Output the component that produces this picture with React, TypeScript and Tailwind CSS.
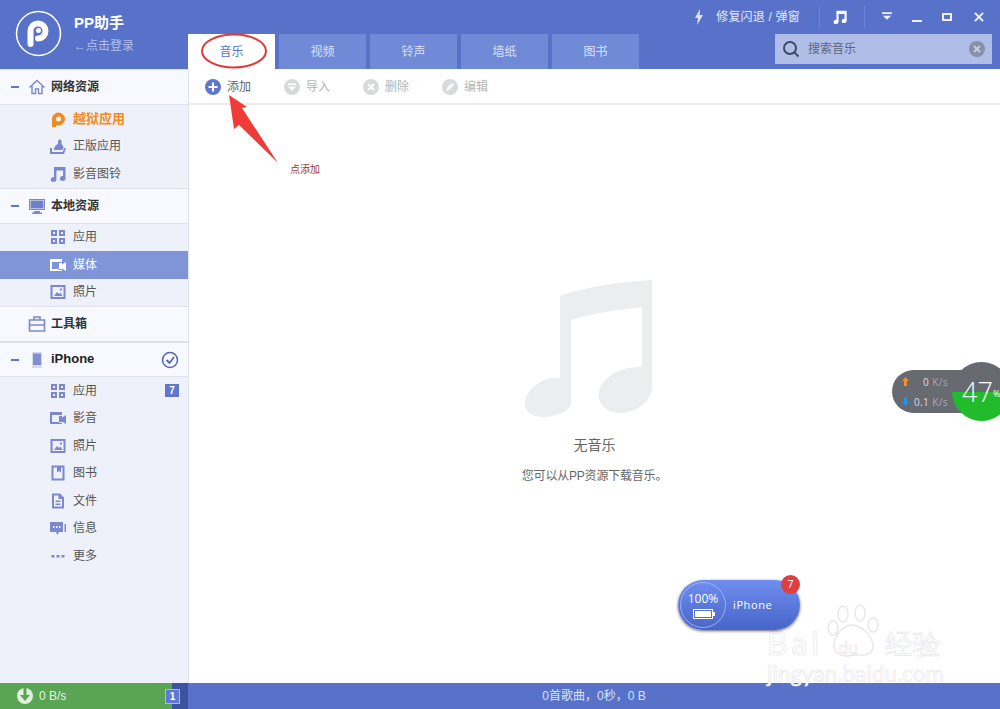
import type { ReactNode } from "react";

const ICON = "#7c88cc";
const OPEN_SANS = { fontFamily: '"Open Sans", sans-serif' };

function Glyph({ children, size = 18 }: { children: ReactNode; size?: number }) {
  return (
    <svg width={size} height={size} viewBox="0 0 18 18" fill={ICON}>
      {children}
    </svg>
  );
}

const icons: Record<string, ReactNode> = {
  grid: (
    <path fillRule="evenodd" d="M2 2h6v6H2zM10 2h6v6h-6zM2 10h6v6H2zM10 10h6v6h-6zM4 4v2h2V4zM12 4v2h2V4zM4 12v2h2v-2zM12 12v2h2v-2z" />
  ),
  video: <path fillRule="evenodd" d="M1 3h12v3H3v7h10v2H1zM10 7h3v1.500L17 6v9l-4-2.500V14h-3z" />,
  photo: (
    <path fillRule="evenodd" d="M1.500 2h15v14h-15zM3.500 4v10h11V4zM5 13l3-4 2 2 1.500-1.500L13.500 13zM11 5.500h2v2h-2z" />
  ),
  book: <path fillRule="evenodd" d="M2.500 1.500h13v15h-13zM4.500 3.500v11h9v-11h-1.500v5l-2-1.500-2 1.500v-5z" />,
  file: <path fillRule="evenodd" d="M3 1.500h8l4 4v11H3zM5 3.500v11h8V7H9.500V3.500zM6.500 8.500h5V10h-5zM6.500 11.500h5V13h-5z" />,
  chat: <path fillRule="evenodd" d="M1 3h13v10h-4l-1.500 3L7 13H1zM4 7v2h1.500V7zM7 7v2h1.500V7zM10 7v2h1.500V7zM15.500 5H17v8h-1.500z" />,
  more: <path d="M2.500 8h3v2.500h-3zM7.500 8h3v2.500h-3zM12.500 8h3v2.500h-3z" />,
  note: <path d="M5 2h11.500v11.500a2.800 2.400 0 1 1-2.400-2.400V5.500H7.400v9a2.800 2.400 0 1 1-2.400-2.400z" />,
  ship: (
    <path fillRule="evenodd" d="M1 11h2v4h10.500L15.500 11H17l-2 6H1zM5 13c0-3 1.500-5 4-6V4.500C9.500 2 12 2 12.500 4v3c1.500 1 2 3 2 5l-2 1z" />
  ),
};

function SubRow({ icon, label, active, badge, orange }: { icon: string; label: string; active?: boolean; badge?: string; orange?: boolean }) {
  return (
    <div className={`flex h-[27.5px] items-center pl-[49px] pr-[9px] ${active ? "bg-[#7f95d7]" : ""}`}>
      <span className="flex w-[24px] shrink-0">
        {orange ? (
          <svg width="18" height="18" viewBox="0 0 18 18">
            <path fillRule="evenodd" fill="#f08c1e" d="M3 9a6.500 6.500 0 1 1 6.500 6.500H7V17H3zM7 9a2.500 2.500 0 1 0 5 0 2.500 2.500 0 0 0-5 0z" />
          </svg>
        ) : active ? (
          <svg width="18" height="18" viewBox="0 0 18 18" fill="#fff">
            {icons[icon]}
          </svg>
        ) : (
          <Glyph>{icons[icon]}</Glyph>
        )}
      </span>
      <span className={`flex-1 ${orange ? "text-[13px] font-bold text-[#f08c1e]" : active ? "text-[12px] text-white" : "text-[12px] text-[#555]"}`}>{label}</span>
      {badge && (
        <span className="flex h-[13px] w-[14px] items-center justify-center bg-[#5f78cd] text-[10px] font-bold text-white">{badge}</span>
      )}
    </div>
  );
}

function Section({ icon, label, collapse = true, right, bold, h = "h-[36px]" }: { icon: ReactNode; label: string; collapse?: boolean; right?: ReactNode; bold?: boolean; h?: string }) {
  return (
    <div className={`flex ${h} items-center border-y border-y-[#dfe2ee] bg-[#f8f9fe] pl-[11px] pr-[9px]`}>
      <span className="w-[17px] shrink-0">{collapse && <span className="block h-[2px] w-[8px] bg-[#5f78cd]" />}</span>
      <span className="flex w-[23px] shrink-0">{icon}</span>
      <span className={`flex-1 ${bold ? "pb-[2px] text-[13px] font-bold text-[#222]" : "text-[12px] font-semibold text-[#333]"}`}>{label}</span>
      {right}
    </div>
  );
}

function Sidebar() {
  return (
    <aside className="flex w-[189px] shrink-0 flex-col border-r border-[#dfe2ea] bg-[#eef0fa]">
      <Section
        label="网络资源"
        icon={
          <svg width="18" height="18" viewBox="0 0 18 18" fill="none" stroke={ICON} strokeWidth="1.400">
            <path d="M1.500 9.500 9 2.500l7.500 7M4 8v7.500h3.500V11h3v4.500H14V8" />
          </svg>
        }
      />
      <div>
        <SubRow icon="p" label="越狱应用" orange />
        <SubRow icon="ship" label="正版应用" />
        <SubRow icon="note" label="影音图铃" />
      </div>
      <Section
        label="本地资源"
        icon={
          <svg width="18" height="18" viewBox="0 0 18 18" fill={ICON}>
            <path fillRule="evenodd" d="M1 2h16v11H1zM2 3v9h14V3zM6 14h6v1.500h2V17H4v-1.500h2z" />
            <path d="M2.500 3.500h13v8h-13z" fill="#6e80c8" />
          </svg>
        }
      />
      <div>
        <SubRow icon="grid" label="应用" />
        <SubRow icon="video" label="媒体" active />
        <SubRow icon="photo" label="照片" />
      </div>
      <Section
        label="工具箱"
        collapse={false}
        icon={
          <svg width="18" height="18" viewBox="0 0 18 18" fill="none" stroke={ICON} strokeWidth="1.600">
            <path d="M1.500 5h15v11h-15zM6 5V2h6v3M1.500 10h15M7.500 10h3" />
          </svg>
        }
      />
      <Section
        label="iPhone"
        bold
        h="h-[35px]"
        icon={
          <svg width="18" height="18" viewBox="0 0 18 18">
            <path d="M4 1h10v16H4z" fill="#d6daee" />
            <path d="M5 2.500h8v11.500H5z" fill="#7f8fcf" />
          </svg>
        }
        right={
          <svg width="18" height="18" viewBox="0 0 18 18" fill="none" stroke="#4f68bd" strokeWidth="1.500">
            <circle cx="9" cy="9" r="7.500" />
            <path d="m5.500 9 3 3 4.500-6" strokeWidth="1.800" />
          </svg>
        }
      />
      <div>
        <SubRow icon="grid" label="应用" badge="7" />
        <SubRow icon="video" label="影音" />
        <SubRow icon="photo" label="照片" />
        <SubRow icon="book" label="图书" />
        <SubRow icon="file" label="文件" />
        <SubRow icon="chat" label="信息" />
        <SubRow icon="more" label="更多" />
      </div>
    </aside>
  );
}

function Header() {
  const tabs = ["视频", "铃声", "墙纸", "图书"];
  return (
    <header className="relative flex h-[69px] shrink-0 bg-[#5872c9]">
      <div className="flex w-[188px] shrink-0 pl-[15px] pt-[10px]">
        <svg width="48" height="48" viewBox="0 0 48 48" className="shrink-0">
          <circle cx="23.500" cy="23.500" r="22" fill="none" stroke="#fff" strokeWidth="1.500" />
          <path d="M15.500 34V21a7.500 7.500 0 1 1 7.500 7.500" fill="none" stroke="#fff" strokeWidth="6" strokeLinecap="round" />
          <circle cx="23.500" cy="20.500" r="2.500" fill="#fff" />
        </svg>
        <div className="ml-[11px]">
          <div className="pt-[3px] text-[15px] font-bold leading-[20px] text-white">PP助手</div>
          <div className="mt-[5px] text-[12px] leading-[16px] text-[#b4c0ea]">←点击登录</div>
        </div>
      </div>
      <div className="flex flex-1 flex-col">
        <div className="flex h-[34px] items-center justify-end pb-[1px] text-white">
          <svg width="10" height="16" viewBox="0 0 10 16" fill="#dfe5f8" className="mr-[12px]">
            <path d="M6 0 1 9h3l-1 7 6-10H5.500z" />
          </svg>
          <span className="text-[12px] tracking-[0.2px] text-[#e4e9fa]">修复闪退 / 弹窗</span>
          <span className="ml-[19px] h-[22px] w-px bg-[#6b84d3]" />
          <svg width="16" height="16" viewBox="0 0 18 18" fill="#fff" className="ml-[12px]">
            {icons.note}
          </svg>
          <span className="ml-[16px] h-[22px] w-px bg-[#6b84d3]" />
          <svg width="10" height="9" viewBox="0 0 12 10" fill="#eef1fb" className="ml-[17px]">
            <path d="M0 0h12v2H0zM1 4h10L6 9z" />
          </svg>
          <span className="ml-[20px] h-[2px] w-[10px] translate-y-[4px] bg-[#eef1fb]" />
          <span className="ml-[20px] h-[8px] w-[10px] border-2 border-[#eef1fb]" />
          <svg width="10" height="10" viewBox="0 0 11 11" stroke="#eef1fb" strokeWidth="2.200" className="ml-[22px] mr-[16px]">
            <path d="m1 1 9 9M10 1l-9 9" />
          </svg>
        </div>
        <div className="flex h-[35px] items-start">
          <div className="flex h-[35px] w-[87px] items-center justify-center bg-white text-[12px] text-[#5872c9]">音乐</div>
          <div className="flex">
            {tabs.map((t) => (
              <div key={t} className="ml-[4px] flex h-[35px] w-[87px] items-center justify-center bg-[#708ad8] text-[12px] text-[#d9e0f6]">
                {t}
              </div>
            ))}
          </div>
          <div className="ml-auto mr-[8px] flex h-[30px] w-[217px] items-center bg-[#b0bde6] pl-[7px] pr-[7px]">
            <svg width="18" height="18" viewBox="0 0 18 18" fill="none" stroke="#3f4a68" strokeWidth="2">
              <circle cx="8" cy="8" r="6" />
              <path d="m12.500 12.500 4 4" />
            </svg>
            <span className="ml-[8px] flex-1 text-[12px] text-[#5b6480]">搜索音乐</span>
            <svg width="16" height="16" viewBox="0 0 16 16">
              <circle cx="8" cy="8" r="8" fill="#8790a8" />
              <path d="m5 5 6 6M11 5l-6 6" stroke="#c5cce2" strokeWidth="2" />
            </svg>
          </div>
        </div>
      </div>
    </header>
  );
}

function ToolButton({ label, symbol, on, w }: { label: string; symbol: ReactNode; on?: boolean; w: string }) {
  return (
    <div className={`flex items-center ${w}`}>
      <svg width="16" height="16" viewBox="0 0 16 16" className="shrink-0">
        <circle cx="8" cy="8" r="8" fill={on ? "#5f78cd" : "#d8d9dc"} />
        {symbol}
      </svg>
      <span className={`ml-[6px] text-[12px] ${on ? "text-[#666]" : "text-[#b5b5b5]"}`}>{label}</span>
    </div>
  );
}

function Toolbar() {
  return (
    <div className="flex h-[36px] shrink-0 items-center border-b-2 border-[#ececee] bg-white pl-[16px] pt-[1px]">
      <ToolButton on w="w-[79px]" label="添加" symbol={<path d="M7 3.500h2V7h3.500v2H9v3.500H7V9H3.500V7H7z" fill="#fff" />} />
      <ToolButton w="w-[79px]" label="导入" symbol={<path d="M4 4.500h8V6H4zM4 7.500h8L8 12z" fill="#fff" />} />
      <ToolButton w="w-[79px]" label="删除" symbol={<path d="m5 5 6 6M11 5l-6 6" stroke="#fff" strokeWidth="2" />} />
      <ToolButton w="w-[79px]" label="编辑" symbol={<path d="m4 12 1-3 5-5 2 2-5 5z" fill="#fff" />} />
    </div>
  );
}

function Empty() {
  return (
    <div className="flex flex-1 flex-col items-center pt-[174px]">
      <svg width="128" height="138" viewBox="0 0 128 138" fill="#ecedef" className="mr-[12px]">
        <path d="M35 17C60 8 95 3 127 1v108c-1 16-20 26-34 25-14-1-21-11-19-21 3-14 20-26 43-25V28C90 31 65 35 46 41v84c-1 8-19 13-26 13-14 0-21-6-20-15 2-14 18-26 35-24z" />
      </svg>
      <div className="mt-[18px] text-[14px] leading-[20px] text-[#666]">无音乐</div>
      <div className="mt-[13px] text-[12px] leading-[16px] tracking-[-0.2px] text-[#666]">您可以从PP资源下载音乐。</div>
    </div>
  );
}

function Annotations() {
  return (
    <>
      <svg width="86" height="44" viewBox="0 0 86 44" className="absolute left-[200px] top-[33px]">
        <ellipse cx="34" cy="18" rx="32" ry="16.500" fill="none" stroke="#e0393b" strokeWidth="2" />
      </svg>
      <svg width="60" height="76" viewBox="0 0 60 76" className="absolute left-[225px] top-[90px]">
        <path d="M4 5 22 17l-5 1 36 55-39-38-5 4z" fill="#f03c38" />
      </svg>
      <span className="absolute left-[290px] top-[163px] text-[10px] leading-[14px] text-[#a03a30]">点添加</span>
    </>
  );
}

function SpeedWidget() {
  return (
    <div className="absolute left-[892px] top-[362px] h-[60px] w-[108px] overflow-hidden" style={OPEN_SANS}>
      <div className="absolute left-0 top-[8px] flex h-[43px] w-[80px] flex-col justify-center rounded-l-[22px] bg-[#686a72] pl-[10px] pr-[24px] text-[10px] leading-[20px] tracking-[0.4px] text-[#dcdde0]">
        <div className="flex items-center justify-between">
          <svg width="7" height="9" viewBox="0 0 7 9" fill="#f0902a">
            <path d="M3.500 0 7 4H5v5H2V4H0z" />
          </svg>
          <span>
            0<span className="text-[#a8a9ae]"> K/s</span>
          </span>
        </div>
        <div className="flex items-center justify-between">
          <svg width="7" height="9" viewBox="0 0 7 9" fill="#2d8fe0">
            <path d="M3.500 9 7 5H5V0H2v5H0z" />
          </svg>
          <span>
            0.1<span className="text-[#a8a9ae]"> K/s</span>
          </span>
        </div>
      </div>
      <div className="absolute left-[60px] top-0 flex h-[59px] w-[59px] flex-col overflow-hidden rounded-full">
        <div className="h-[30px] bg-[#686a72]" />
        <div className="flex-1 bg-[#22bb2c]" />
      </div>
      <span className="absolute left-[70px] top-[12px] text-[27px] font-light leading-[36px] text-white">47</span>
      <span className="absolute left-[101px] top-[26px] text-[9px] leading-[12px] text-white">%</span>
    </div>
  );
}

function PhoneWidget() {
  return (
    <div
      className="absolute left-[678px] top-[580px] flex h-[50px] w-[122px] items-center rounded-[25px] bg-gradient-to-b from-[#6f8ef0] to-[#4865c8] pl-[2px] shadow-[0_1px_3px_rgba(30,30,60,0.7)]"
      style={OPEN_SANS}
    >
      <div className="flex h-[46px] w-[46px] flex-col items-center justify-center rounded-full border border-[#9db1f2] text-[12px] leading-[15px] text-white">
        100%
        <span className="relative mt-[3px] flex h-[10px] w-[20px] border border-white p-[1px]">
          <span className="flex-1 bg-white" />
          <span className="absolute right-[-3px] top-[2px] h-[4px] w-[2px] bg-white" />
        </span>
      </div>
      <span className="ml-[7px] text-[11px] tracking-[0.6px] text-white">iPhone</span>
      <span className="absolute right-0 top-[-5px] flex h-[19px] w-[19px] items-center justify-center rounded-full bg-[#dd4040] text-[11px] text-white">7</span>
    </div>
  );
}

function Watermark() {
  const outline = "text-white [-webkit-text-stroke:0.7px_#e8e8ec]";
  return (
    <div className="pointer-events-none absolute left-[767px] top-[603px] h-[84px] w-[180px]" style={{ fontFamily: "Lato, sans-serif" }}>
      <svg width="54" height="58" viewBox="0 0 54 58" fill="#fff" stroke="#e8e8ec" strokeWidth="1.500" className="absolute left-[60px] top-0">
        <ellipse cx="16" cy="11" rx="5" ry="8" />
        <ellipse cx="33" cy="10" rx="5" ry="8" />
        <ellipse cx="6" cy="25" rx="5" ry="7" />
        <ellipse cx="46" cy="22" rx="5" ry="7" />
        <path d="M25 22c-8 0-18 10-18 20 0 8 6 11 12 11 4 0 8-2 13-1 8 1 14-2 14-9 0-10-12-21-21-21z" />
      </svg>
      <span className={`absolute left-0 top-[22px] text-[32px] leading-[36px] tracking-[4px] ${outline}`}>Bai</span>
      <span className={`absolute left-[71px] top-[33px] text-[18px] leading-[22px] ${outline}`}>du</span>
      <span className={`absolute left-[118px] top-[23px] text-[28px] leading-[34px] ${outline}`}>经验</span>
      <span className={`absolute left-0 top-[59px] text-[22.5px] leading-[24px] ${outline}`}>jingyan.baidu.com</span>
    </div>
  );
}

function StatusBar() {
  return (
    <footer className="flex h-[26px] shrink-0 items-center bg-[#5872c9] text-[12px] text-white">
      <div className="flex h-full w-[172px] items-center bg-[#5aa554] pl-[17px]">
        <svg width="16" height="16" viewBox="0 0 16 16" className="shrink-0">
          <circle cx="8" cy="8" r="8" fill="#dff0dc" />
          <path d="M6.500 0h3v7H13l-5 6-5-6h3.500z" fill="#5aa554" />
        </svg>
        <span className="ml-[6px] text-[#e6f3e3]">0 B/s</span>
      </div>
      <div className="flex h-full w-[16px] items-center bg-[#3d52a0]">
        <span className="-ml-[7px] flex h-[15px] w-[15px] items-center justify-center border border-[#aab8e8] bg-[#6079cf] text-[10px] font-bold">1</span>
      </div>
      <div className="flex-1 text-center text-[12px] text-[#dbe2f7]">0首歌曲，0秒，0 B</div>
    </footer>
  );
}

export default function App() {
  return (
    <div
      className="relative flex h-[709px] w-[1000px] flex-col overflow-hidden bg-white"
      style={{ fontFamily: '"Liberation Sans", "Noto Sans CJK SC", sans-serif' }}
    >
      <Header />
      <div className="flex min-h-0 flex-1">
        <Sidebar />
        <main className="flex min-w-0 flex-1 flex-col">
          <Toolbar />
          <Empty />
        </main>
      </div>
      <StatusBar />
      <Annotations />
      <Watermark />
      <SpeedWidget />
      <PhoneWidget />
    </div>
  );
}
